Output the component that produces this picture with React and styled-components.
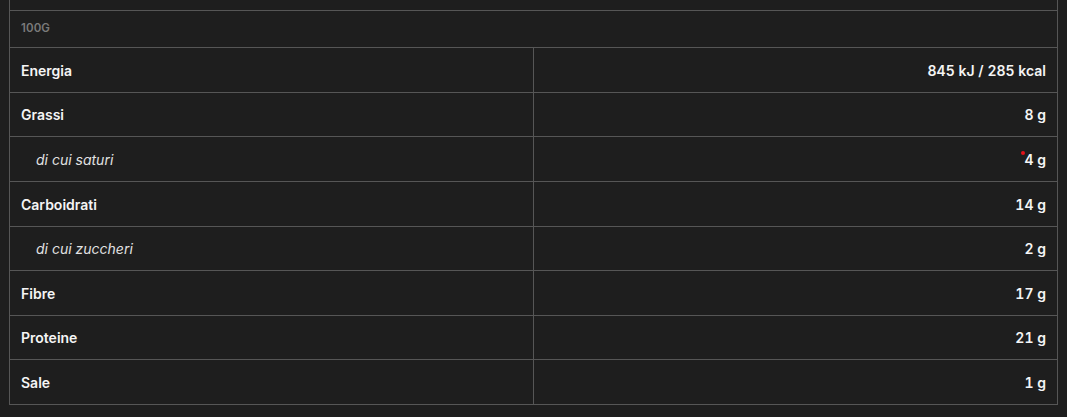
import React from 'react';
import styled, { createGlobalStyle } from 'styled-components';

const GlobalStyle = createGlobalStyle`
  *, *::before, *::after {
    box-sizing: border-box;
  }
  html, body {
    margin: 0;
    padding: 0;
    background-color: #1e1e1e;
    font-family: Inter, "Liberation Sans", sans-serif;
  }
`;

const Page = styled.div`
  padding: 0 9px;
  height: 417px;
  overflow: hidden;
`;

const Card = styled.div`
  border: 1px solid #565656;
  border-top: none;
`;

const TopStrip = styled.div`
  height: 11px;
  border-bottom: 1px solid #565656;
`;

const HeadRow = styled.div`
  height: 37px;
  display: flex;
  align-items: center;
  padding: 0 11px 2px;
  font-size: 11.5px;
  font-weight: 600;
  letter-spacing: 0.1px;
  color: #7a7a7a;
  text-transform: uppercase;
  border-bottom: 1px solid #565656;
`;

const Row = styled.div`
  display: grid;
  grid-template-columns: 524px 1fr;
  height: ${p => p.$h}px;
  border-bottom: 1px solid #565656;
  &:last-child {
    border-bottom: none;
  }
`;

const NameCell = styled.div`
  display: flex;
  align-items: center;
  padding-left: ${p => (p.$sub ? 26 : 11)}px;
  border-right: 1px solid #565656;
  font-size: 14px;
  color: ${p => (p.$sub ? '#e2e2e2' : '#f5f5f5')};
  font-weight: ${p => (p.$sub ? 400 : 600)};
  font-style: ${p => (p.$sub ? 'italic' : 'normal')};
`;

const ValueCell = styled.div`
  display: flex;
  align-items: center;
  justify-content: flex-end;
  padding-right: 11px;
  font-size: 14px;
  font-weight: 600;
  color: #f5f5f5;
  font-variant-numeric: tabular-nums;
`;

const Marked = styled.span`
  position: relative;
`;

const Dot = styled.span`
  position: absolute;
  left: -3px;
  top: 0px;
  width: 4px;
  height: 4px;
  border-radius: 50%;
  background: #e3121b;
`;

const rows = [
  { name: 'Energia', value: '845 kJ / 285 kcal' },
  { name: 'Grassi', value: '8 g' },
  { name: 'di cui saturi', value: '4 g', sub: true, mark: true },
  { name: 'Carboidrati', value: '14 g' },
  { name: 'di cui zuccheri', value: '2 g', sub: true },
  { name: 'Fibre', value: '17 g' },
  { name: 'Proteine', value: '21 g' },
  { name: 'Sale', value: '1 g' },
];

const heights = [45, 44, 45, 45, 44, 45, 44, 44];

export default function App() {
  return (
    <>
      <GlobalStyle />
      <Page>
        <Card>
          <TopStrip />
          <HeadRow>100g</HeadRow>
          {rows.map((r, i) => (
            <Row key={r.name} $h={heights[i]}>
              <NameCell $sub={r.sub}>{r.name}</NameCell>
              <ValueCell>
                {r.mark ? (
                  <Marked>
                    <Dot />
                    {r.value}
                  </Marked>
                ) : (
                  r.value
                )}
              </ValueCell>
            </Row>
          ))}
        </Card>
      </Page>
    </>
  );
}
